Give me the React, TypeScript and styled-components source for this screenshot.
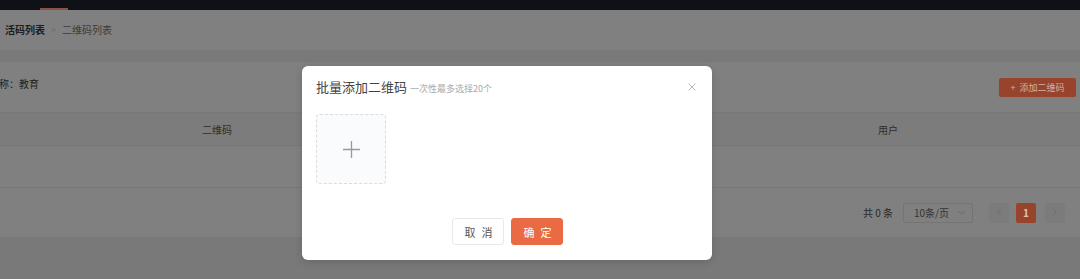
import React from "react";
import styled, { createGlobalStyle } from "styled-components";

const Global = createGlobalStyle`
  html, body {
    margin: 0;
    padding: 0;
    background: #797979;
    font-family: "Noto Sans CJK SC", "Noto Sans", sans-serif;
  }
  * { box-sizing: border-box; }
`;

// Page palette as seen under the dark mask
const Page = styled.div`
  width: 1080px;
  min-height: 279px;
  background: #797979;
  position: relative;
  overflow: hidden;
`;

const TopBar = styled.div`
  height: 10px;
  background: #101017;
  display: flex;
  align-items: flex-end;
  padding-left: 40px;
`;

const TabMark = styled.div`
  width: 28px;
  height: 2px;
  background: #8c5248;
`;

const Breadcrumb = styled.div`
  height: 40px;
  background: #808080;
  display: flex;
  align-items: center;
  padding-left: 5px;
  gap: 6px;
  font-size: 10px;
  line-height: 12px;
`;

const Crumb = styled.span<{ $active?: boolean }>`
  color: ${(p) => (p.$active ? "#1c1c1c" : "#3c3c3c")};
  font-weight: ${(p) => (p.$active ? 700 : 400)};
`;

const Sep = styled.span`
  color: #6c6c6c;
  font-size: 9px;
`;

const Gap = styled.div`
  height: 12px;
  background: #797979;
`;

const Card = styled.div`
  background: #808080;
`;

const Toolbar = styled.div`
  height: 50px;
  display: flex;
  align-items: flex-start;
  justify-content: space-between;
  padding: 16px 4px 0 0;
`;

const Label = styled.span`
  font-size: 10px;
  line-height: 12px;
  color: #222;
  margin-left: -1px;
`;

const AddButton = styled.div`
  width: 77px;
  height: 19px;
  border-radius: 2px;
  background: #98442c;
  color: #cfb3a8;
  font-size: 9px;
  display: flex;
  align-items: center;
  justify-content: center;
  gap: 4px;
`;

const HeadRow = styled.div`
  display: grid;
  grid-template-columns: 434px 262px 1fr;
  height: 34px;
  background: #7c7c7c;
  border-top: 1px solid #787878;
  border-bottom: 1px solid #777;
`;

const HeadCell = styled.div`
  display: flex;
  align-items: center;
  justify-content: center;
  font-size: 10px;
  color: #2c2c2c;
`;

const BodyRow = styled.div`
  height: 42px;
  border-bottom: 1px solid #787878;
`;

const Pager = styled.div`
  height: 49px;
  display: flex;
  align-items: center;
  justify-content: flex-end;
  padding-right: 15px;
  font-size: 10px;
  color: #2a2a2a;
`;

const Total = styled.span`
  margin-right: 10px;
`;

const SizeSelect = styled.div`
  width: 70px;
  height: 20px;
  border: 1px solid #747474;
  border-radius: 2px;
  display: flex;
  align-items: center;
  padding: 0 6px 0 10px;
  justify-content: space-between;
  color: #333;
  margin-right: 16px;
`;

const PageBtn = styled.div<{ $current?: boolean }>`
  width: 20px;
  height: 20px;
  border-radius: 2px;
  display: flex;
  align-items: center;
  justify-content: center;
  background: ${(p) => (p.$current ? "#98442c" : "#7b7b7b")};
  color: ${(p) => (p.$current ? "#dcc3ba" : "#6a6a6a")};
  font-size: 10px;
  font-weight: 700;
`;

const PageList = styled.div`
  display: flex;
  align-items: center;
  gap: 7px;
  & > :last-child {
    margin-left: 2px;
  }
`;

// Modal
const Modal = styled.div`
  position: absolute;
  left: 302px;
  top: 66px;
  width: 410px;
  height: 194px;
  background: #fff;
  border-radius: 6px;
  box-shadow: 0 2px 8px rgba(0, 0, 0, 0.15);
  display: flex;
  flex-direction: column;
  padding: 14px 14px 15px 14px;
`;

const ModalHead = styled.div`
  display: flex;
  align-items: center;
  justify-content: space-between;
  height: 14px;
  padding-right: 2px;
`;

const TitleGroup = styled.div`
  display: flex;
  align-items: baseline;
  gap: 3px;
`;

const Title = styled.span`
  font-size: 13px;
  color: #444;
  line-height: 14px;
`;

const Sub = styled.span`
  font-size: 9px;
  color: #aaa;
`;

const Upload = styled.div`
  margin-top: 20px;
  width: 70px;
  height: 70px;
  border: 1px dashed #dcdcdc;
  border-radius: 4px;
  background: #fafbfc;
  display: flex;
  align-items: center;
  justify-content: center;
`;

const Footer = styled.div`
  margin-top: auto;
  display: flex;
  justify-content: center;
  gap: 7px;
`;

const Btn = styled.div<{ $primary?: boolean }>`
  width: 52px;
  height: 27px;
  border-radius: 3px;
  display: flex;
  align-items: center;
  justify-content: center;
  font-size: 11px;
  letter-spacing: 6px;
  padding-left: 8px;
  background: ${(p) => (p.$primary ? "#ea6b43" : "#fff")};
  color: ${(p) => (p.$primary ? "#fff" : "#555")};
  border: 1px solid ${(p) => (p.$primary ? "#ea6b43" : "#e8e8e8")};
`;

const Plus = () => (
  <svg width="17" height="17" viewBox="0 0 17 17">
    <path d="M8.5 0v17M0 8.5h17" stroke="#9a9a9a" strokeWidth="1.3" fill="none" />
  </svg>
);

const Close = () => (
  <svg width="8" height="8" viewBox="0 0 8 8">
    <path d="M0.5 0.5l7 7M7.5 0.5l-7 7" stroke="#bbb" strokeWidth="1" fill="none" />
  </svg>
);

const Chevron = ({ dir, color }: { dir: "left" | "right" | "down"; color: string }) => {
  const d =
    dir === "left" ? "M5.5 1.5L2.5 4.5l3 3" : dir === "right" ? "M2.5 1.5l3 3-3 3" : "M1 3l3.5 3L8 3";
  return (
    <svg width="9" height="9" viewBox="0 0 9 9">
      <path d={d} stroke={color} strokeWidth="1" fill="none" />
    </svg>
  );
};

export default function App() {
  return (
    <>
      <Global />
      <Page>
        <TopBar>
          <TabMark />
        </TopBar>
        <Breadcrumb>
          <Crumb $active>活码列表</Crumb>
          <Sep>&gt;</Sep>
          <Crumb>二维码列表</Crumb>
        </Breadcrumb>
        <Gap />
        <Card>
          <Toolbar>
            <Label>称：教育</Label>
            <AddButton>
              <span>+</span>
              <span>添加二维码</span>
            </AddButton>
          </Toolbar>
          <HeadRow>
            <HeadCell>二维码</HeadCell>
            <HeadCell />
            <HeadCell>用户</HeadCell>
          </HeadRow>
          <BodyRow />
          <Pager>
            <Total>共 0 条</Total>
            <SizeSelect>
              <span>10条/页</span>
              <Chevron dir="down" color="#6a6a6a" />
            </SizeSelect>
            <PageList>
              <PageBtn>
                <Chevron dir="left" color="#6a6a6a" />
              </PageBtn>
              <PageBtn $current>1</PageBtn>
              <PageBtn>
                <Chevron dir="right" color="#6a6a6a" />
              </PageBtn>
            </PageList>
          </Pager>
        </Card>

        <Modal>
          <ModalHead>
            <TitleGroup>
              <Title>批量添加二维码</Title>
              <Sub>一次性最多选择20个</Sub>
            </TitleGroup>
            <Close />
          </ModalHead>
          <Upload>
            <Plus />
          </Upload>
          <Footer>
            <Btn>取消</Btn>
            <Btn $primary>确定</Btn>
          </Footer>
        </Modal>
      </Page>
    </>
  );
}
